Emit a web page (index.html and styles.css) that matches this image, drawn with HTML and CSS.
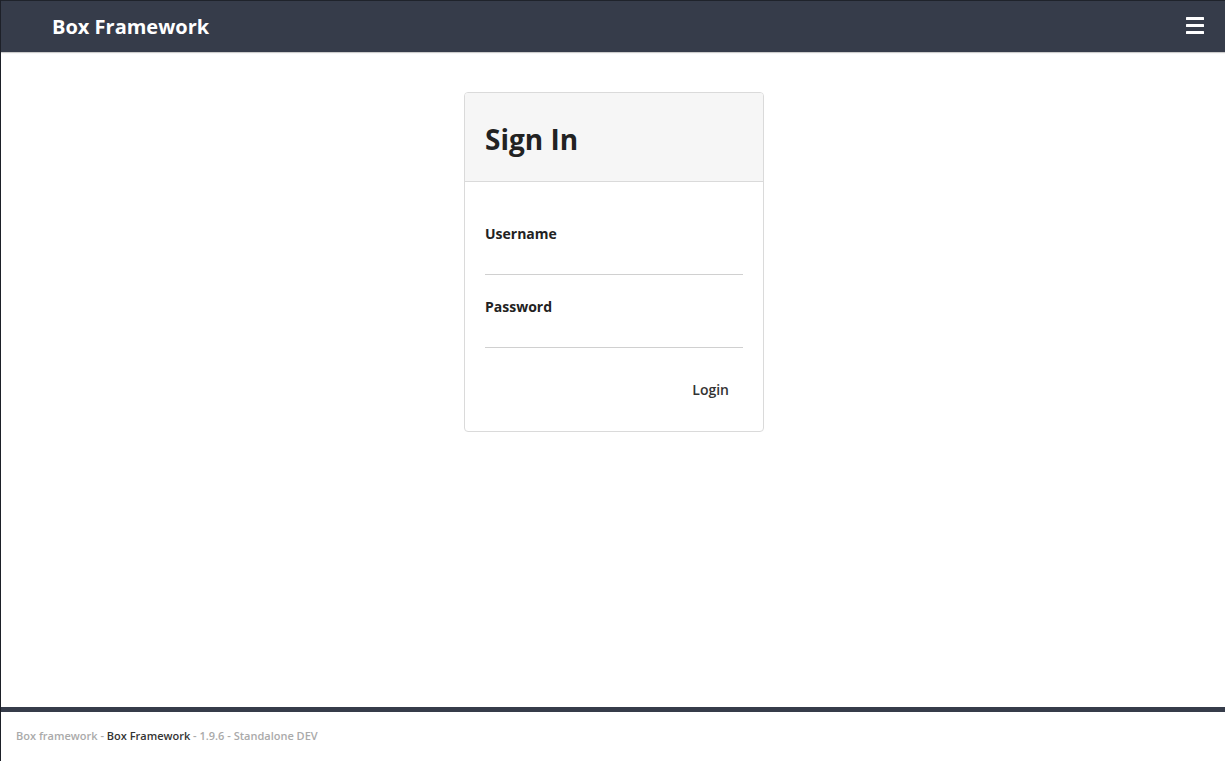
FILE: index.html
```html
<!DOCTYPE html>
<html lang="en">
<head>
  <meta charset="UTF-8">
  <meta name="viewport" content="width=device-width, initial-scale=1.0">
  <title>Box Framework</title>
  <link rel="stylesheet" href="styles.css">
</head>
<body>
  <header class="navbar">
    <a class="brand" href="#">Box Framework</a>
    <button class="menu-btn" aria-label="Menu">
      <svg width="18" height="17" viewBox="0 0 18 17">
        <rect x="0" y="0" width="18" height="3" rx="0.5" fill="#fff"/>
        <rect x="0" y="7" width="18" height="3" rx="0.5" fill="#fff"/>
        <rect x="0" y="14" width="18" height="3" rx="0.5" fill="#fff"/>
      </svg>
    </button>
  </header>

  <main class="content">
    <div class="card">
      <div class="card-header">
        <h1>Sign In</h1>
      </div>
      <form class="card-body" onsubmit="return false">
        <div class="field">
          <label for="username">Username</label>
          <input id="username" type="text">
        </div>
        <div class="field">
          <label for="password">Password</label>
          <input id="password" type="password">
        </div>
        <div class="actions">
          <button class="login-btn" type="submit">Login</button>
        </div>
      </form>
    </div>
  </main>

  <footer class="footer">
    <span class="muted">Box framework - </span><span class="strong">Box Framework</span><span class="muted"> - 1.9.6 - Standalone DEV</span>
  </footer>
</body>
</html>
```

FILE: styles.css
```css
* {margin: 0; padding: 0; box-sizing: border-box;}
body {
  font-family: 'Open Sans', 'Liberation Sans', sans-serif;
  background: #fff;
  color: #222;
  min-height: 100vh;
  display: flex;
  flex-direction: column;
  border-left: 1px solid #1d2028;
}
.navbar {
  height: 52px;
  background: #363c4a;
  border-top: 1px solid #1f232b;
  box-shadow: 0 1px 1px rgba(0,0,0,0.2);
  display: flex;
  justify-content: space-between;
  align-items: center;
  padding: 0 21px 0 51px;
}
.brand {
  color: #fff;
  font-size: 20px;
  font-weight: 700;
  text-decoration: none;
}
.menu-btn {
  background: none;
  border: none;
  display: flex;
  cursor: pointer;
  margin-top: -2px;
}
.content {
  flex: 1;
  display: flex;
  justify-content: center;
  align-items: flex-start;
  padding: 40px 0 0 2px;
}
.card {
  width: 300px;
  border: 1px solid #dadada;
  border-radius: 4px;
  overflow: hidden;
}
.card-header {
  background: #f6f6f6;
  border-bottom: 1px solid #dadada;
  padding: 20px;
}
.card-header h1 {
  font-size: 28px;
  font-weight: 700;
  line-height: 48px;
  color: #222;
  padding-top: 2px;
  margin-bottom: -2px;
}
.card-body {
  padding: 42px 20px 23px;
}
.field + .field {
  margin-top: 22px;
}
.field label {
  display: block;
  font-size: 14px;
  font-weight: 700;
  line-height: 20px;
}
.field input {
  display: block;
  width: 100%;
  height: 31px;
  border: none;
  border-bottom: 1px solid #d0d0d0;
  background: transparent;
  font-family: inherit;
  font-size: 14px;
  outline: none;
}
.actions {
  display: flex;
  justify-content: flex-end;
  margin-top: 24px;
}
.login-btn {
  background: none;
  border: none;
  padding: 8px 14px;
  font-family: inherit;
  font-size: 14px;
  font-weight: 600;
  line-height: 20px;
  color: #333;
  cursor: pointer;
}
.footer {
  border-top: 5px solid #363c4a;
  padding: 16px 15px 18px;
  font-size: 11px;
  font-weight: 600;
  line-height: 15px;
}
.footer .muted {
  color: #aaa;
}
.footer .strong {
  color: #333;
}
```
